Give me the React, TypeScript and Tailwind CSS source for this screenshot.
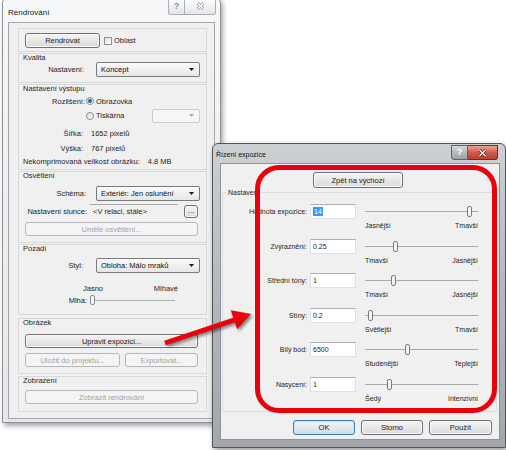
import type { ReactNode } from 'react';

type BtnProps = { children: ReactNode; className?: string; disabled?: boolean; primary?: boolean };

function Btn({ children, className = '', disabled = false, primary = false }: BtnProps) {
  const look = disabled
    ? 'border-[#b5b9bd] bg-[#f4f4f4] text-[#a3a3a3]'
    : primary
      ? 'border-[#3c7fb1] bg-linear-to-b from-[#f2f6f9] to-[#d5dde4] text-[#1a1a1a] shadow-[inset_0_0_0_1px_#c2e3f5]'
      : 'border-[#707070] bg-linear-to-b from-[#f5f5f5] to-[#dadada] text-[#1a1a1a] shadow-[inset_0_0_0_1px_#fbfbfb]';
  return (
    <div className={`flex shrink-0 items-center justify-center rounded-[3px] border ${look} ${className}`}>
      {children}
    </div>
  );
}

function Combo({ value, className = '', disabled = false }: { value?: string; className?: string; disabled?: boolean }) {
  return (
    <div
      className={`flex items-center justify-between rounded-[2px] border pl-[4px] pr-[5px] ${
        disabled ? 'border-[#cfcfcf] bg-[#f6f6f6]' : 'border-[#7a7a7a] bg-linear-to-b from-[#fbfbfb] to-[#e6e6e6]'
      } ${className}`}
    >
      <span className="text-[#111]">{value}</span>
      <svg width="5" height="3" viewBox="0 0 5 3">
        <path d="M0 0h5L2.5 3z" fill={disabled ? '#a8a8a8' : '#1a1a1a'} />
      </svg>
    </div>
  );
}

function Radio({ checked = false, className = '' }: { checked?: boolean; className?: string }) {
  return (
    <span
      className={`flex h-[8px] w-[8px] shrink-0 items-center justify-center rounded-full border border-[#8e8f8f] bg-linear-to-br from-[#dadada] to-white ${className}`}
    >
      {checked && <span className="h-[4px] w-[4px] rounded-full bg-[#2b63b5]" />}
    </span>
  );
}

function Group({ title, className = '', children }: { title?: string; className?: string; children: ReactNode }) {
  return (
    <div className={`flex shrink-0 flex-col border border-[#d9d9d9] ${className}`}>
      {title && <div className="ml-[4px] h-[8px] leading-[8px] text-[#1e1e1e]">{title}</div>}
      {children}
    </div>
  );
}

function XGlyph({ light = false }: { light?: boolean }) {
  return (
    <svg width="9" height="8" viewBox="0 0 9 8">
      <path d="M1.5 1L7.5 7M7.5 1L1.5 7" stroke={light ? '#5a1e18' : '#8c9197'} strokeWidth="2.8" />
      <path d="M1.5 1L7.5 7M7.5 1L1.5 7" stroke="#fff" strokeWidth="1.3" />
    </svg>
  );
}

function RenderWindow() {
  return (
    <div className="absolute left-[2px] top-[-3px] flex h-[426px] w-[219px] flex-col rounded-t-[6px] border border-[#8d9196] bg-linear-to-b from-[#f6f7f8] to-[#e4e7eb] text-[7.5px] leading-[9px] text-[#1e1e1e] shadow-[2px_3px_5px_rgba(0,0,0,0.35)]">
      <div className="flex h-[24px] shrink-0 items-start">
        <span className="ml-[5px] mt-[10px] text-[8px] leading-[9px] text-[#222]">Rendrování</span>
        <div className="ml-auto mr-[4px] flex h-[17px]">
          <div className="flex w-[17px] items-center justify-center rounded-bl-[3px] border border-t-0 border-[#a9aeb4] bg-linear-to-b from-white to-[#e3e6ea] text-[9px] font-bold text-[#8c9197]">
            ?
          </div>
          <div className="flex w-[31px] items-center justify-center rounded-br-[3px] border border-l-0 border-t-0 border-[#a9aeb4] bg-linear-to-b from-white to-[#e3e6ea]">
            <XGlyph />
          </div>
        </div>
      </div>

      <div className="mx-[5px] mb-[3px] flex flex-1 flex-col border border-[#a2a7ad] bg-[#f0f0f0] pl-[9px] pr-[7px] pt-[5px]">
        <div className="flex h-[24px] shrink-0 items-start border border-[#d9d9d9] pl-[6px] pt-[4px]">
          <Btn className="h-[15px] w-[75px]">Rendrovat</Btn>
          <div className="ml-[4px] flex h-[15px] items-center">
            <span className="h-[8px] w-[8px] border border-[#8e8f8f] bg-linear-to-br from-[#dcdcdc] to-white" />
            <span className="ml-[2px]">Oblast</span>
          </div>
        </div>

        <Group title="Kvalita" className="mt-[1px] h-[30px]">
          <div className="flex h-[15px] items-center">
            <span className="w-[65px] text-right">Nastavení:</span>
            <Combo value="Koncept" className="ml-[12px] h-[15px] w-[104px]" />
          </div>
        </Group>

        <Group title="Nastavení výstupu" className="mt-[1px] h-[86px]">
          <div className="mt-[1px] flex h-[14px] items-center">
            <span className="w-[66px] text-right">Rozlišení:</span>
            <Radio checked className="ml-[1px]" />
            <span className="ml-[2px]">Obrazovka</span>
          </div>
          <div className="flex h-[15px] items-center">
            <Radio className="ml-[67px]" />
            <span className="ml-[2px]">Tiskárna</span>
            <Combo disabled className="ml-auto mr-[6px] h-[14px] w-[48px]" />
          </div>
          <div className="mt-[4px] flex h-[12px] items-center">
            <span className="w-[64px] text-right">Šířka:</span>
            <span className="ml-[8px]">1652 pixelů</span>
          </div>
          <div className="mt-[3px] flex h-[12px] items-center">
            <span className="w-[64px] text-right">Výška:</span>
            <span className="ml-[8px]">767 pixelů</span>
          </div>
          <div className="mt-[1px] flex h-[12px] items-center pl-[4px]">
            <span>Nekomprimovaná velikost obrázku:</span>
            <span className="ml-[8px]">4.8 MB</span>
          </div>
        </Group>

        <Group title="Osvětlení" className="mt-[1px] h-[72px]">
          <div className="mt-[6px] flex h-[15px] items-center">
            <span className="w-[67px] text-right">Schéma:</span>
            <Combo value="Exteriér: Jen oslunění" className="ml-[10px] h-[15px] w-[104px]" />
          </div>
          <div className="mt-[3px] flex h-[14px] items-center">
            <span className="w-[68px] text-right">Nastavení slunce:</span>
            <div className="ml-[3px] flex h-[14px] w-[88px] items-center border-t border-[#a9a9a9] pl-[3px]">
              &lt;V relaci, stále&gt;
            </div>
            <Btn className="ml-[6px] h-[13px] w-[14px] leading-[6px]">...</Btn>
          </div>
          <Btn disabled className="ml-[6px] mt-[4px] h-[14px] w-[173px]">
            Umělé osvětlení...
          </Btn>
        </Group>

        <Group title="Pozadí" className="mt-[1px] h-[71px]">
          <div className="mt-[5px] flex h-[15px] items-center">
            <span className="w-[64px] text-right">Styl:</span>
            <Combo value="Obloha: Málo mraků" className="ml-[13px] h-[15px] w-[104px]" />
          </div>
          <div className="mt-[10px] flex h-[10px] items-center">
            <span className="ml-[64px]">Jasno</span>
            <span className="ml-auto mr-[28px]">Mlhavé</span>
          </div>
          <div className="mt-[2px] flex h-[10px] items-center">
            <span className="w-[68px] text-right">Mlha:</span>
            <div className="relative ml-[3px] h-[10px] w-[85px]">
              <div className="absolute left-0 right-0 top-[5px] h-px bg-[#b0b0b0]" />
              <div className="absolute left-0 top-0 h-[10px] w-[5px] rounded-[2px] border border-[#8c8c8c] bg-[#f6f6f6]" />
            </div>
          </div>
        </Group>

        <Group title="Obrázek" className="mt-[3px] h-[56px]">
          <Btn className="ml-[6px] mt-[7px] h-[14px] w-[173px]">Upravit expozici...</Btn>
          <div className="ml-[6px] mt-[5px] flex gap-[5px]">
            <Btn disabled className="h-[14px] w-[95px]">
              Uložit do projektu...
            </Btn>
            <Btn disabled className="h-[14px] w-[73px]">
              Exportovat...
            </Btn>
          </div>
        </Group>

        <Group title="Zobrazení" className="mt-[2px] h-[36px]">
          <Btn disabled className="ml-[6px] mt-[5px] h-[14px] w-[173px]">
            Zobrazit rendrování
          </Btn>
        </Group>
      </div>
    </div>
  );
}

const rows = [
  { label: 'Hodnota expozice:', value: '14', pos: 104, left: 'Jasnější', right: 'Tmavší', selected: true },
  { label: 'Zvýraznění:', value: '0.25', pos: 30, left: 'Tmavší', right: 'Jasnější' },
  { label: 'Střední tóny:', value: '1', pos: 28, left: 'Tmavší', right: 'Jasnější' },
  { label: 'Stíny:', value: '0.2', pos: 5, left: 'Světlejší', right: 'Tmavší' },
  { label: 'Bílý bod:', value: '6500', pos: 42, left: 'Studenější', right: 'Teplejší' },
  { label: 'Nasycení:', value: '1', pos: 24, left: 'Šedý', right: 'Intenzivní' },
];

function ExposureWindow() {
  return (
    <div className="absolute left-[212px] top-[143px] flex h-[305px] w-[294px] flex-col rounded-t-[6px] border border-[#50555b] bg-linear-to-b from-[#cdd0d3] via-[#b4b7bb] to-[#a3a6aa] text-[7px] leading-[9px] text-[#1e1e1e] shadow-[2px_3px_6px_rgba(0,0,0,0.4)]">
      <div className="flex h-[19px] shrink-0 items-start">
        <span className="ml-[3px] mt-[6px] leading-[9px] text-[#111]">Řízení expozice</span>
        <div className="ml-auto mr-[7px] mt-[1px] flex h-[15px]">
          <div className="flex w-[17px] items-center justify-center rounded-bl-[3px] border border-[#5c6066] bg-linear-to-b from-[#d6d8db] to-[#9a9da2] text-[9px] font-bold text-white">
            ?
          </div>
          <div className="flex w-[30px] items-center justify-center rounded-br-[3px] border border-l-0 border-[#6d2b25] bg-linear-to-b from-[#e9a496] via-[#d05a4b] to-[#c13e2e]">
            <XGlyph light />
          </div>
        </div>
      </div>

      <div className="mb-[7px] ml-[7px] mr-[5px] flex flex-1 flex-col border border-[#8f9399] bg-[#f0f0f0]">
        <Btn className="ml-[92px] mt-[8px] h-[16px] w-[90px] text-[7.5px]">Zpět na výchozí</Btn>

        <div className="relative ml-[1px] mr-[2px] mt-[4px] h-[220px] rounded-[3px] border border-[#d5dfe5] pt-[11px]">
          <span className="absolute left-[4px] top-[-5px] bg-[#f0f0f0] px-[1px] leading-[9px]">Nastavení</span>
          {rows.map((r) => (
            <div key={r.label} className="flex h-[34.6px] items-start">
              <div className="flex h-[15px] w-[84px] items-center justify-end">{r.label}</div>
              <div className="ml-[3px] flex h-[15px] w-[46px] items-center border border-[#dbdfe6] border-t-[#abadb3] bg-white pl-[2px]">
                {r.selected ? <span className="bg-[#3399ff] px-px text-white">{r.value}</span> : r.value}
              </div>
              <div className="ml-[9px] w-[113px]">
                <div className="relative h-[15px]">
                  <div className="absolute left-0 right-0 top-[7px] h-px bg-[#a9a9a9]" />
                  <div
                    className="absolute top-[2px] h-[11px] w-[5px] rounded-[2px] border border-[#7d7d7d] bg-[#f4f4f4]"
                    style={{ left: r.pos - 2.5 }}
                  />
                </div>
                <div className="mt-[2px] flex justify-between leading-[9px]">
                  <span>{r.left}</span>
                  <span>{r.right}</span>
                </div>
              </div>
            </div>
          ))}
        </div>

        <div className="mr-[7px] mt-[8px] flex justify-end gap-[6px] text-[7.5px]">
          <Btn primary className="h-[15px] w-[62px]">
            OK
          </Btn>
          <Btn className="h-[15px] w-[62px]">Storno</Btn>
          <Btn className="h-[15px] w-[63px]">Použít</Btn>
        </div>
      </div>
    </div>
  );
}

export default function App() {
  return (
    <div className="relative h-[450px] w-[506px] overflow-hidden bg-white font-['Liberation_Sans',Arial,sans-serif]">
      <RenderWindow />
      <ExposureWindow />

      <div className="absolute left-[255px] top-[165px] h-[248px] w-[242px] rounded-[24px] border-[5px] border-[#e8000b]" />

      <svg
        className="absolute left-[158px] top-[302px] drop-shadow-[2px_2px_1.5px_rgba(0,0,0,0.45)]"
        width="100"
        height="50"
        viewBox="158 302 100 50"
      >
        <path d="M165 343L236 319.3" stroke="#e8000b" strokeWidth="5" />
        <path d="M251 314L230.7 310.3L237.1 329.3Z" fill="#e8000b" />
      </svg>
    </div>
  );
}
